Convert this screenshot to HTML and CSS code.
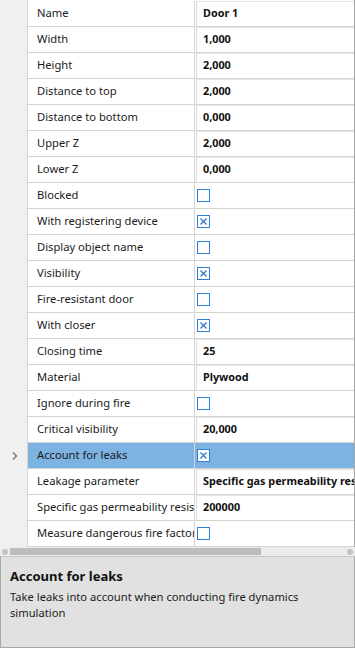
FILE: index.html
```html
<!DOCTYPE html>
<html>
<head>
<meta charset="utf-8">
<link rel="stylesheet" href="styles.css">
</head>
<body>
<div class="panel">
  <div class="grid">
    <div class="row"><div class="gut"></div><div class="name">Name</div><div class="val"><div class="tb">Door 1</div></div></div>
    <div class="row"><div class="gut"></div><div class="name">Width</div><div class="val"><div class="tb">1,000</div></div></div>
    <div class="row"><div class="gut"></div><div class="name">Height</div><div class="val"><div class="tb">2,000</div></div></div>
    <div class="row"><div class="gut"></div><div class="name">Distance to top</div><div class="val"><div class="tb">2,000</div></div></div>
    <div class="row"><div class="gut"></div><div class="name">Distance to bottom</div><div class="val"><div class="tb">0,000</div></div></div>
    <div class="row"><div class="gut"></div><div class="name">Upper Z</div><div class="val"><div class="tb">2,000</div></div></div>
    <div class="row"><div class="gut"></div><div class="name">Lower Z</div><div class="val"><div class="tb">0,000</div></div></div>
    <div class="row"><div class="gut"></div><div class="name">Blocked</div><div class="val"><span class="cb"></span></div></div>
    <div class="row"><div class="gut"></div><div class="name">With registering device</div><div class="val"><span class="cb"><svg viewBox="0 0 11 11" width="11" height="11"><path d="M2.5 2.5 L8.5 8.5 M8.5 2.5 L2.5 8.5" stroke="#2b7bd6" stroke-width="1.3" fill="none"/></svg></span></div></div>
    <div class="row"><div class="gut"></div><div class="name">Display object name</div><div class="val"><span class="cb"></span></div></div>
    <div class="row"><div class="gut"></div><div class="name">Visibility</div><div class="val"><span class="cb"><svg viewBox="0 0 11 11" width="11" height="11"><path d="M2.5 2.5 L8.5 8.5 M8.5 2.5 L2.5 8.5" stroke="#2b7bd6" stroke-width="1.3" fill="none"/></svg></span></div></div>
    <div class="row"><div class="gut"></div><div class="name">Fire-resistant door</div><div class="val"><span class="cb"></span></div></div>
    <div class="row"><div class="gut"></div><div class="name">With closer</div><div class="val"><span class="cb"><svg viewBox="0 0 11 11" width="11" height="11"><path d="M2.5 2.5 L8.5 8.5 M8.5 2.5 L2.5 8.5" stroke="#2b7bd6" stroke-width="1.3" fill="none"/></svg></span></div></div>
    <div class="row"><div class="gut"></div><div class="name">Closing time</div><div class="val"><div class="tb">25</div></div></div>
    <div class="row"><div class="gut"></div><div class="name">Material</div><div class="val"><div class="tb">Plywood</div></div></div>
    <div class="row"><div class="gut"></div><div class="name">Ignore during fire</div><div class="val"><span class="cb"></span></div></div>
    <div class="row"><div class="gut"></div><div class="name">Critical visibility</div><div class="val"><div class="tb">20,000</div></div></div>
    <div class="row sel"><div class="gut"><svg viewBox="0 0 8 10" width="8" height="10"><path d="M2 1.5 L5.5 5 L2 8.5" stroke="#6d6d6d" stroke-width="1.2" fill="none"/></svg></div><div class="name">Account for leaks</div><div class="val"><span class="cb"><svg viewBox="0 0 11 11" width="11" height="11"><path d="M2.5 2.5 L8.5 8.5 M8.5 2.5 L2.5 8.5" stroke="#2b7bd6" stroke-width="1.3" fill="none"/></svg></span></div></div>
    <div class="row"><div class="gut"></div><div class="name">Leakage parameter</div><div class="val"><div class="tb">Specific gas permeability resistance</div></div></div>
    <div class="row"><div class="gut"></div><div class="name">Specific gas permeability resistance</div><div class="val"><div class="tb">200000</div></div></div>
    <div class="row"><div class="gut"></div><div class="name">Measure dangerous fire factors</div><div class="val"><span class="cb"></span></div></div>
  </div>
  <div class="hscroll">
    <span class="dot"></span>
    <span class="thumb"></span>
    <span class="spacer"></span>
    <span class="dot"></span>
  </div>
  <div class="desc">
    <div class="desc-title">Account for leaks</div>
    <div class="desc-text">Take leaks into account when conducting fire dynamics simulation</div>
  </div>
</div>
</body>
</html>
```

FILE: styles.css
```css
html, body {
  margin: 0;
  padding: 0;
  background: #ffffff;
}
body {
  width: 355px;
  height: 648px;
  overflow: hidden;
  font-family: "Noto Sans", "Open Sans", sans-serif;
  font-size: 11.2px;
  color: #1b1b1b;
}
.panel {
  display: flex;
  flex-direction: column;
  width: 355px;
  height: 648px;
}
.grid {
  display: flex;
  flex-direction: column;
  padding-top: 1px;
  background: linear-gradient(to right, #f0f0f0 0, #f0f0f0 27px, #d4d4d4 27px, #d4d4d4 28px, #ffffff 28px);
  border-right: 1px solid #a6a6a6;
}
.row {
  display: grid;
  grid-template-columns: 28px 167px 1fr;
  height: 26px;
}
.gut {
  display: flex;
  align-items: center;
  justify-content: center;
  padding-left: 1px;
}
.name {
  display: flex;
  align-items: center;
  padding-left: 9px;
  padding-bottom: 2px;
  white-space: nowrap;
  overflow: hidden;
  text-overflow: clip;
  border-right: 1px solid #d4d4d4;
  border-bottom: 1px solid #d4d4d4;
}
.val {
  display: flex;
  align-items: center;
  overflow: hidden;
  border-bottom: 1px solid #d4d4d4;
}
.tb {
  align-self: stretch;
  flex: 1;
  display: flex;
  align-items: center;
  margin-left: 1px;
  padding-left: 6px;
  padding-bottom: 2px;
  white-space: nowrap;
  overflow: hidden;
  font-weight: bold;
  font-size: 10.8px;
  color: #111111;
  border-left: 1px solid #dcdcdc;
  box-shadow: inset 0 1px 0 #e4e4e4;
}
.cb {
  display: flex;
  align-items: center;
  justify-content: center;
  width: 11px;
  height: 11px;
  margin-left: 2px;
  border: 1px solid #2f7fd8;
  background: #ffffff;
}
.sel .name,
.sel .val {
  background: #7cb3e2;
}
.hscroll {
  display: flex;
  align-items: center;
  height: 9px;
  background: #ececec;
  padding: 0 2px 0 2px;
}
.dot {
  width: 6px;
  height: 6px;
  border-radius: 50%;
  background: #c2c2c2;
}
.thumb {
  width: 251px;
  height: 7px;
  margin-left: 2px;
  background: #bdbdbd;
}
.spacer {
  flex: 1;
}
.desc {
  flex: 1;
  background: #e1e1e1;
  border: 1px solid #a9a9a9;
  border-top: 1px solid #c8c8c8;
  padding: 9px 9px 0 9px;
}
.desc-title {
  font-weight: bold;
  font-size: 13px;
  line-height: 20px;
  color: #111111;
}
.desc-text {
  margin-top: 3px;
  font-size: 11.2px;
  line-height: 16px;
  color: #1b1b1b;
  width: 310px;
}
```
